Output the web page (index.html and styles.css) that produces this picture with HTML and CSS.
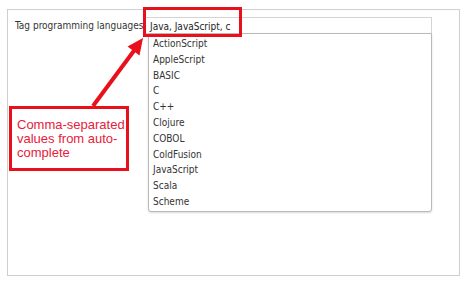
FILE: index.html
```html
<!DOCTYPE html>
<html lang="en">
<head>
    <meta charset="UTF-8">
    <title>Tag programming languages</title>
    <link rel="stylesheet" href="styles.css">
</head>
<body>
    <div class="panel">
        <div class="field">
            <label class="field-label">Tag programming languages:</label>
            <div class="field-input">
                <div class="input-box">Java, JavaScript, c</div>
                <!-- autocomplete popup -->
                <ul class="suggest">
                    <li>ActionScript</li>
                    <li>AppleScript</li>
                    <li>BASIC</li>
                    <li>C</li>
                    <li>C++</li>
                    <li>Clojure</li>
                    <li>COBOL</li>
                    <li>ColdFusion</li>
                    <li>JavaScript</li>
                    <li>Scala</li>
                    <li>Scheme</li>
                </ul>
            </div>
        </div>
    </div>

    <!-- annotation overlay -->
    <div class="mark-input"></div>
    <div class="callout">Comma-separated values from auto-complete</div>
    <svg class="arrow" width="474" height="285" viewBox="0 0 474 285">
        <line x1="93" y1="106" x2="136" y2="48" stroke="#e8101a" stroke-width="4"/>
        <polygon points="143,38 139.5,55.5 127.5,46.5" fill="#e8101a"/>
    </svg>
</body>
</html>
```

FILE: styles.css
```css
body {
    margin: 0;
    background: #ffffff;
    font-family: "DejaVu Sans Condensed", "DejaVu Sans", sans-serif;
    font-size: 10px;
    color: #333333;
}
.panel {
    margin: 9px 0 0 7px;
    width: 453px;
    height: 267px;
    border: 1px solid #cfcfcf;
    box-sizing: border-box;
}
.field {
    display: flex;
    align-items: flex-start;
    padding: 7px 0 0 7px;
}
.field-label {
    width: 130px;
    line-height: 17px;
    white-space: nowrap;
}
.field-input {
    position: relative;
    width: 287px;
}
.input-box {
    height: 17px;
    line-height: 17px;
    border: 1px solid #d4d4d4;
    box-sizing: border-box;
    padding-left: 4px;
    color: #1e1e1e;
}
.suggest {
    position: absolute;
    top: 16px;
    left: 3px;
    right: 0;
    margin: 0;
    padding: 2px 0 1px 0;
    list-style: none;
    background: #ffffff;
    border: 1px solid #b9b9b9;
    border-radius: 0 0 3px 3px;
    box-shadow: 0 1px 2px rgba(0,0,0,0.15);
}
.suggest li {
    line-height: 15.8px;
    padding-left: 4px;
}
.mark-input {
    position: absolute;
    left: 143px;
    top: 7px;
    width: 99px;
    height: 30px;
    border: 3px solid #e8101a;
    box-sizing: border-box;
}
.callout {
    position: absolute;
    left: 9px;
    top: 106px;
    width: 120px;
    height: 65px;
    border: 3px solid #e8101a;
    box-sizing: border-box;
    padding: 9px 0 0 5px;
    font-family: "Liberation Sans", Arial, sans-serif;
    font-size: 13px;
    line-height: 14px;
    color: #e8203a;
    background: #ffffff;
}
.arrow {
    position: absolute;
    left: 0;
    top: 0;
    pointer-events: none;
}
```
